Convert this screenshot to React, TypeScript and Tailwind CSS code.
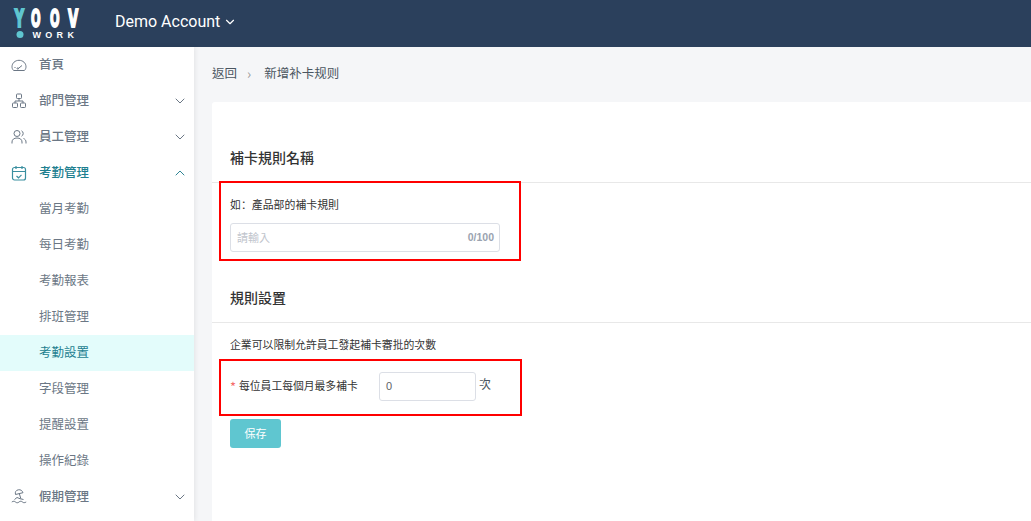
import { ChevronDown, ChevronUp } from "lucide-react";
import type { ReactNode } from "react";

const Gauge = () => (
	<svg width="16" height="16" viewBox="0 0 16 16" fill="none" stroke="currentColor" strokeWidth="1">
		<path d="M2.600 13.500C1.400 12.300 1 11 1 9.800 1 6.100 4.100 3.300 8 3.300s7 2.800 7 6.500c0 1.200-.4 2.500-1.600 3.700z" />
		<path d="M7.300 11.500 11 8.500" />
		<circle cx="6.800" cy="11.500" r="0.700" />
		<path d="M3.500 10.500h1" />
	</svg>
);

const Org = () => (
	<svg width="16" height="16" viewBox="0 0 16 16" fill="none" stroke="currentColor" strokeWidth="1">
		<rect x="5.500" y="1" width="5" height="4.500" rx="0.800" />
		<rect x="1.500" y="10" width="5" height="4.500" rx="0.800" />
		<rect x="9.500" y="10" width="5" height="4.500" rx="0.800" />
		<path d="M8 5.500V8M4 10V8h8v2" />
	</svg>
);

const Users = () => (
	<svg width="16" height="16" viewBox="0 0 16 16" fill="none" stroke="currentColor" strokeWidth="1">
		<circle cx="6" cy="4.500" r="3" />
		<path d="M1 14.500v-1.500c0-2.500 2-4 5-4s5 1.500 5 4v1.500" />
		<path d="M10.500 1.800a3 3 0 0 1 0 5.400" />
		<path d="M12.500 9.500c1.500.6 2.500 1.800 2.500 3.500v1.500" />
	</svg>
);

const Calendar = () => (
	<svg width="16" height="16" viewBox="0 0 16 16" fill="none" stroke="currentColor" strokeWidth="1.200">
		<rect x="1.500" y="2.500" width="13" height="12.500" rx="2" />
		<path d="M1.500 6.500h13M5 1v3M11 1v3" />
		<path d="m5.500 11 2 1.800 3-3" />
	</svg>
);

const Beach = () => (
	<svg width="16" height="16" viewBox="0 0 16 16" fill="none" stroke="currentColor" strokeWidth="1">
		<path d="M4.500 5.500C3.800 3 5 1.200 7.300 .8c2.300-.4 4 .8 4.700 2.900z" />
		<path d="M8.300 4.600 9.800 9.500" />
		<path d="M3.500 10.500 6 8.500l3 1.200 3.500.8" />
		<path d="M.8 13c1.500-1 2.700-1 3.700 0s2.500 1 3.500 0 2.500-1 3.500 0 2.300.8 3.700 0" />
	</svg>
);

// wordmark: real text in an svg so each letter can be narrowed and thickened
const Logo = () => (
	<svg width="66" height="32" viewBox="0 0 66 32" className="ml-[15px] shrink-0 overflow-visible">
		<g fontFamily="'DejaVu Sans', sans-serif" fontWeight="700" fontSize="24.500">
			<text transform="translate(-0.300 19) scale(0.52 1)" fill="#5fc6d0" stroke="#5fc6d0" strokeWidth="2.200">Y</text>
			<text transform="translate(16 19) scale(0.46 1)" fill="#fff" stroke="#fff" strokeWidth="2">O</text>
			<text transform="translate(35 19) scale(0.46 1)" fill="#fff" stroke="#fff" strokeWidth="2">O</text>
			<text transform="translate(53 19) scale(0.54 1)" fill="#fff" stroke="#fff" strokeWidth="2">V</text>
		</g>
		<circle cx="5" cy="26.500" r="3.500" fill="#5fc6d0" />
		<text x="17.500" y="29.500" fontFamily="'Liberation Sans', sans-serif" fontWeight="700" fontSize="9" letterSpacing="4.300" fill="#fff">WORK</text>
	</svg>
);

type Item = { label: string; icon?: ReactNode; arrow?: "up" | "down"; tone?: "teal"; active?: boolean };

const items: Item[] = [
	{ label: "首頁", icon: <Gauge /> },
	{ label: "部門管理", icon: <Org />, arrow: "down" },
	{ label: "員工管理", icon: <Users />, arrow: "down" },
	{ label: "考勤管理", icon: <Calendar />, arrow: "up", tone: "teal" },
	{ label: "當月考勤" },
	{ label: "每日考勤" },
	{ label: "考勤報表" },
	{ label: "排班管理" },
	{ label: "考勤設置", active: true },
	{ label: "字段管理" },
	{ label: "提醒設置" },
	{ label: "操作紀錄" },
	{ label: "假期管理", icon: <Beach />, arrow: "down" },
];

function SideRow({ item }: { item: Item }) {
	const teal = item.tone === "teal" || item.active;
	return (
		<div className={`relative flex h-9 shrink-0 items-center ${item.active ? "bg-[#e3fcfb]" : ""} ${teal ? "text-[#1d7f90]" : "text-[#6b7785]"}`}>
			<div className={`flex w-[39px] shrink-0 justify-center pr-[1px] ${item.tone === "teal" ? "text-[#3a8fa0]" : "text-[#6b7785]"}`}>{item.icon}</div>
			<span className={`flex-1 pb-[2px] text-[12.500px] ${item.icon ? "font-medium" : ""}`}>{item.label}</span>
			{item.arrow === "down" && <ChevronDown size={16} strokeWidth={1.500} className="mr-[6px] text-[#6b7785]" />}
			{item.arrow === "up" && <ChevronUp size={16} strokeWidth={1.500} className="mr-[6px] text-[#2f8595]" />}
		</div>
	);
}

export default function App() {
	return (
		<div className="flex h-[521px] w-[1031px] flex-col overflow-hidden bg-[#f5f6f8] font-['Noto_Sans_CJK_TC','Liberation_Sans',sans-serif] text-[#333]">
			<header className="flex h-[47px] shrink-0 items-center bg-[#2b405c]">
				<Logo />
				<span className="mb-[4px] ml-[34px] font-['Roboto',sans-serif] text-[16px] text-white">Demo Account</span>
				<ChevronDown size={14} strokeWidth={2} className="mb-[3px] ml-[3px] text-white" />
			</header>

			<div className="flex min-h-0 flex-1">
				<aside className="z-10 flex w-[194px] shrink-0 flex-col overflow-hidden bg-white shadow-[1px_0_5px_rgba(0,0,0,0.08)]">
					{items.map((item) => (
						<SideRow key={item.label} item={item} />
					))}
				</aside>

				<main className="flex min-w-0 flex-1 flex-col pl-[18px]">
					<div className="flex h-[55px] shrink-0 items-center pb-[2px] text-[12.500px] text-[#4a5560]">
						<span>返回</span>
						<span className="mr-[13px] ml-[10px] pb-[1px] text-[14px] leading-none text-[#999]">›</span>
						<span>新增补卡规则</span>
					</div>

					<section className="relative flex-1 rounded-tl-[3px] bg-white pt-[44px]">
						<h2 className="ml-[18px] h-[36px] text-[14px] leading-[22px] font-medium text-[#333]">補卡規則名稱</h2>
						<div className="h-px bg-[#e8e8e8]" />
						<p className="mt-[13px] ml-[18px] text-[10.900px] leading-[16px] text-[#333]">
							如<span className="font-['Noto_Sans_CJK_SC',sans-serif]">：</span>產品部的補卡規則
						</p>
						<div className="mt-[11px] ml-[18px] flex h-[29px] w-[270px] items-center justify-between rounded-[3px] border border-[#dcdfe6] pr-[5px] pl-[6px] text-[11px]">
							<span className="text-[#c0c4cc]">請輸入</span>
							<span className="font-['Liberation_Sans',sans-serif] text-[10.500px] font-bold text-[#9aa3b0]">0/100</span>
						</div>

						<h2 className="mt-[34px] ml-[18px] h-[36px] text-[14px] leading-[22px] font-medium text-[#333]">規則設置</h2>
						<div className="h-px bg-[#e8e8e8]" />
						<p className="mt-[13px] ml-[18px] text-[10.850px] leading-[16px] text-[#333]">企業可以限制允許員工發起補卡審批的次數</p>

						<div className="mt-[20px] ml-[18px] flex h-[29px] items-center text-[10.800px]">
							<span className="mr-[4px] w-[5px] text-[13px] leading-none text-[#f56c6c]">*</span>
							<span className="w-[140px] pb-[3px]">每位員工每個月最多補卡</span>
							<div className="flex h-[29px] w-[97px] items-center rounded-[3px] border border-[#dcdfe6] px-[6px] font-['Liberation_Sans',sans-serif] text-[11px] text-[#606266]">0</div>
							<span className="ml-[3px] pb-[5px] text-[12px] text-[#4a5560]">次</span>
						</div>

						<button className="mt-[18px] ml-[18px] flex h-[29px] w-[51px] items-center justify-center rounded-[3px] bg-[#5fc6d0] text-[11px] text-white">保存</button>

						{/* red annotation boxes over the form */}
						<div className="pointer-events-none absolute top-[79px] left-[7px] h-[80px] w-[302px] border-2 border-[#f00]" />
						<div className="pointer-events-none absolute top-[257px] left-[7px] h-[57px] w-[303px] border-2 border-[#f00]" />
					</section>
				</main>
			</div>
		</div>
	);
}
